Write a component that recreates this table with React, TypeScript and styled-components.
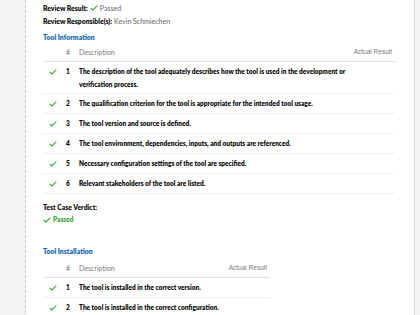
import React from 'react';
import styled, { createGlobalStyle } from 'styled-components';

const GlobalStyle = createGlobalStyle`
  html, body {
    margin: 0;
    padding: 0;
    background: #ffffff;
  }
  body {
    font-family: Lato, 'Open Sans', sans-serif;
    color: #222;
  }
`;

const Page = styled.div`
  display: flex;
  min-height: 315px;
`;

const LeftRail = styled.div`
  width: 25px;
  flex-shrink: 0;
  background: #f3f3f3;
  border-right: 1px dashed #c8c8c8;
`;

const RightRail = styled.div`
  width: 5px;
  flex-shrink: 0;
  background: #f4f4f4;
  border-left: 1px solid #dcdcdc;
`;

const Main = styled.main`
  flex: 1;
  padding-top: 2px;
  padding-left: 17px;
  font-size: 6.5px;
  line-height: 12px;
`;

const InfoLine = styled.div`
  margin-bottom: 1px;
  height: 12px;
  color: #666;
  font-size: 7px;
  display: flex;
  align-items: center;
  gap: 2px;

  b {
    color: #111;
    font-weight: 800;
    font-size: 6.8px;
  }
`;

const SectionTitle = styled.div<{ $top: number; $bottom: number }>`
  margin-top: ${({ $top }) => $top}px;
  margin-bottom: ${({ $bottom }) => $bottom}px;
  color: #1769b0;
  font-weight: 800;
  font-size: 6.9px;
`;

const Table = styled.div<{ $width: number }>`
  width: ${({ $width }) => $width}px;
`;

const Row = styled.div<{ $head?: boolean }>`
  display: grid;
  grid-template-columns: 20px 16px 1fr 46px;
  padding: ${({ $head }) => ($head ? '4px 0 3px' : '4px 0 2px')};
  line-height: ${({ $head }) => ($head ? '12px' : '12.5px')};
  border-bottom: 1px solid ${({ $head }) => ($head ? '#e2e2e2' : '#f0f0f0')};
  color: ${({ $head }) => ($head ? '#7a7a7a' : '#0d0d0d')};
  font-weight: ${({ $head }) => ($head ? 400 : 800)};
  font-size: ${({ $head }) => ($head ? '7px' : '6.5px')};
`;

const CheckCell = styled.div`
  display: flex;
  justify-content: center;
  align-items: center;
  height: 13px;
`;

const NumCell = styled.div`
  padding-left: 3px;
`;

const ResultCell = styled.div`
  text-align: right;
  padding-right: 3px;
  white-space: nowrap;
  font-family: 'Liberation Sans', sans-serif;
  font-size: 6.5px;
`;

const VerdictLabel = styled.div`
  margin-top: 7px;
  font-weight: 800;
  font-size: 6.8px;
  color: #111;
`;

const VerdictValue = styled.div`
  display: flex;
  align-items: center;
  gap: 2px;
  height: 12px;
  margin-top: 1px;
  color: #3aa63a;
  font-weight: 800;
`;

const Check = ({ size = 8 }: { size?: number }) => (
  <svg width={size} height={size * 0.8} viewBox="0 0 10 8">
    <path d="M0.3 4.4 L1.6 3.2 L3.6 5 L8.6 0.2 L9.7 1.3 L3.6 7.6 Z" fill="#53b253" />
  </svg>
);

type Item = { text: string };

const ChecklistTable = ({ width, items }: { width: number; items: Item[] }) => (
  <Table $width={width}>
    <Row $head>
      <div />
      <NumCell>#</NumCell>
      <div>Description</div>
      <ResultCell>Actual Result</ResultCell>
    </Row>
    {items.map((item, i) => (
      <Row key={i}>
        <CheckCell>
          <Check />
        </CheckCell>
        <NumCell>{i + 1}</NumCell>
        <div>{item.text}</div>
        <div />
      </Row>
    ))}
  </Table>
);

const infoItems: Item[] = [
  {
    text: 'The description of the tool adequately describes how the tool is used in the development or verification process.',
  },
  { text: 'The qualification criterion for the tool is appropriate for the intended tool usage.' },
  { text: 'The tool version and source is defined.' },
  { text: 'The tool environment, dependencies, inputs, and outputs are referenced.' },
  { text: 'Necessary configuration settings of the tool are specified.' },
  { text: 'Relevant stakeholders of the tool are listed.' },
];

const installItems: Item[] = [
  { text: 'The tool is installed in the correct version.' },
  { text: 'The tool is installed in the correct configuration.' },
];

const App = () => (
  <>
    <GlobalStyle />
    <Page>
      <LeftRail />
      <Main>
        <InfoLine>
          <b>Review Result:</b>
          <Check />
          <span>Passed</span>
        </InfoLine>
        <InfoLine>
          <b>Review Responsible(s):</b>
          <span>Kevin Schmiechen</span>
        </InfoLine>
        <SectionTitle $top={4} $bottom={-1}>
          Tool Information
        </SectionTitle>
        <ChecklistTable width={352} items={infoItems} />
        <VerdictLabel>Test Case Verdict:</VerdictLabel>
        <VerdictValue>
          <Check />
          Passed
        </VerdictValue>
        <SectionTitle $top={19} $bottom={1}>
          Tool Installation
        </SectionTitle>
        <ChecklistTable width={227} items={installItems} />
      </Main>
      <RightRail />
    </Page>
  </>
);

export default App;
